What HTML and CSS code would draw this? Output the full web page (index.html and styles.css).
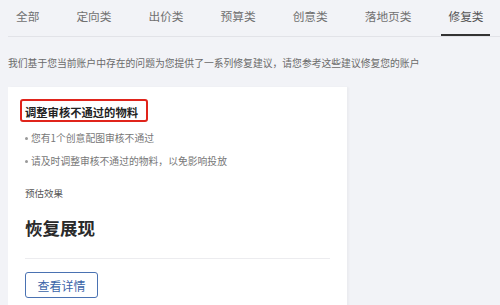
FILE: index.html
```html
<!DOCTYPE html>
<html lang="zh">
<head>
<meta charset="utf-8">
<link rel="stylesheet" href="styles.css">
</head>
<body>
<div class="page">
  <nav class="tabs">
    <span class="tab">全部</span>
    <span class="tab">定向类</span>
    <span class="tab">出价类</span>
    <span class="tab">预算类</span>
    <span class="tab">创意类</span>
    <span class="tab">落地页类</span>
    <span class="tab active">修复类</span>
  </nav>
  <p class="desc">我们基于您当前账户中存在的问题为您提供了一系列修复建议，请您参考这些建议修复您的账户</p>
  <section class="card">
    <h2 class="title">调整审核不通过的物料</h2>
    <ul class="bullets">
      <li>您有1个创意配图审核不通过</li>
      <li>请及时调整审核不通过的物料，以免影响投放</li>
    </ul>
    <div class="label">预估效果</div>
    <div class="effect">恢复展现</div>
    <div class="divider"></div>
    <button class="btn">查看详情</button>
  </section>
</div>
</body>
</html>
```
FILE: styles.css
```css
html, body {
  margin: 0;
  padding: 0;
  background: #f2f3f7;
  font-family: "Noto Sans CJK SC", "Noto Sans", sans-serif;
}
.page {
  padding-left: 8px;
  height: 305px;
  overflow: hidden;
}
.tabs {
  display: flex;
  gap: 37px;
  height: 36px;
  padding-left: 8px;
  border-bottom: 1px solid #e2e3e8;
}
.tab {
  position: relative;
  font-size: 11.7px;
  line-height: 31px;
  color: #707070;
  white-space: nowrap;
}
.tab.active {
  color: #555;
}
.tab.active::after {
  content: "";
  position: absolute;
  left: -7px;
  right: -6px;
  bottom: 0;
  height: 2px;
  background: #333;
}
.desc {
  margin: 19px 0 0;
  font-size: 9.8px;
  line-height: 14px;
  color: #6a6a6a;
  white-space: nowrap;
}
.card {
  display: flex;
  flex-direction: column;
  align-items: flex-start;
  margin-top: 17px;
  width: 305px;
  height: 240px;
  background: #fff;
  padding: 12px 17px 0 17px;
  box-shadow: 2px 0 2px rgba(0,0,0,0.03);
}
.title {
  margin: 0 0 0 -5px;
  padding: 4px 8px 1px 3px;
  border: 2px solid #e0241b;
  border-radius: 3px;
  font-size: 11.3px;
  line-height: 14px;
  font-weight: 700;
  color: #222;
  white-space: nowrap;
}
.bullets {
  list-style: none;
  margin: 8.5px 0 0;
  padding: 0;
}
.bullets li {
  position: relative;
  padding-left: 6px;
  font-size: 9.8px;
  line-height: 14px;
  color: #777;
  white-space: nowrap;
}
.bullets li + li {
  margin-top: 9px;
}
.bullets li::before {
  content: "";
  position: absolute;
  left: 0;
  top: 6px;
  width: 3px;
  height: 3px;
  border-radius: 50%;
  background: #999;
}
.label {
  margin-top: 17.5px;
  font-size: 9.5px;
  line-height: 16px;
  color: #555;
}
.effect {
  margin-top: 15px;
  font-size: 17.5px;
  line-height: 24px;
  font-weight: 700;
  color: #2a2a2a;
}
.divider {
  align-self: stretch;
  margin-top: 18px;
  height: 1px;
  background: #ececef;
}
.btn {
  display: block;
  margin-top: 13px;
  width: 73px;
  height: 26px;
  padding: 0;
  background: #fff;
  border: 1.5px solid #4a72b2;
  border-radius: 3px;
  font-family: inherit;
  font-size: 12px;
  color: #3b64a8;
}
```
